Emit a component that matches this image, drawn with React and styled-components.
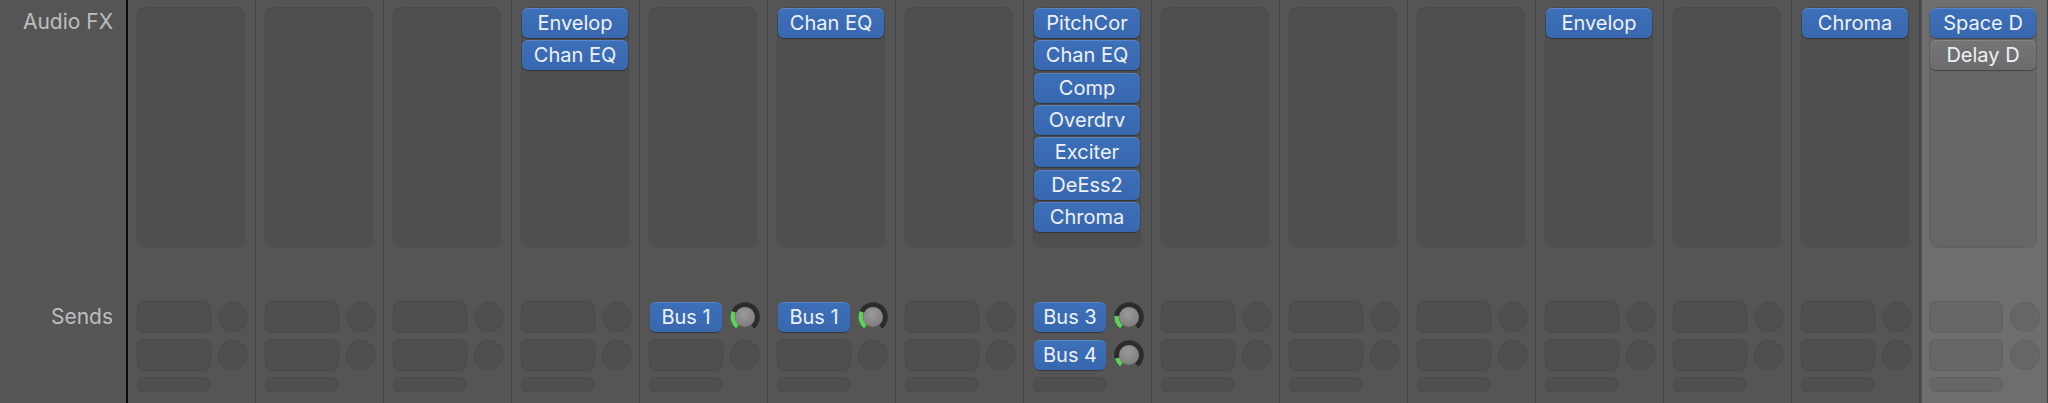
import React from 'react'
import styled, { createGlobalStyle } from 'styled-components'

const GlobalStyle = createGlobalStyle`
  html, body {
    margin: 0;
    padding: 0;
    background: #555555;
  }
  body {
    font-family: "Inter", "Liberation Sans", sans-serif;
  }
`

const Mixer = styled.div`
  display: flex;
  width: 2048px;
  height: 403px;
  background: #555555;
  overflow: hidden;
`

const LabelColumn = styled.div`
  width: 126px;
  flex: none;
  border-right: 2px solid #0a0a0a;
  padding-top: 7px;
  box-sizing: content-box;
`

const FxArea = styled.div`
  height: 241px;
  margin-bottom: 53px;
`

const Label = styled.div`
  height: ${p => p.$h}px;
  line-height: ${p => p.$h}px;
  text-align: right;
  padding-right: 13px;
  font-size: 21px;
  color: #bebebe;
`

const Strip = styled.div`
  width: 128px;
  flex: none;
  box-sizing: border-box;
  padding: 7px 0 0 9px;
  background: ${p => (p.$selected ? '#6e6e6e' : '#555555')};
  border-right: 1px solid #474747;
  box-shadow: ${p => (p.$selected ? 'inset 2px 0 0 #4e4e4e' : 'none')};
`

const FxPanel = styled.div`
  width: 108px;
  height: 241px;
  box-sizing: border-box;
  padding: 1px;
  border-radius: 9px;
  background: rgba(0, 0, 0, 0.07);
  box-shadow: inset 0 0 0 1px rgba(0, 0, 0, 0.05);
  display: flex;
  flex-direction: column;
  gap: 2.35px;
  margin-bottom: 53px;
`

const PluginButton = styled.div`
  height: 30px;
  box-sizing: border-box;
  border-radius: 6px;
  background: ${p => (p.$off ? 'linear-gradient(#757575, #6c6c6c)' : 'linear-gradient(#3d70ba, #3767af)')};
  box-shadow: inset 0 1px 0 ${p => (p.$off ? 'rgba(255,255,255,0.12)' : 'rgba(255,255,255,0.14)')}, 0 1px 1px rgba(0, 0, 0, 0.35);
  color: #eef2f8;
  font-size: 20px;
  line-height: 30px;
  text-align: center;
  white-space: nowrap;
  overflow: hidden;
`

const SendRow = styled.div`
  display: flex;
  align-items: center;
  gap: 7px;
  height: 32px;
  margin-bottom: 6px;
`

const SendSlot = styled.div`
  width: 74px;
  height: 32px;
  box-sizing: border-box;
  border-radius: 7px;
  padding: 1px;
  background: ${p => (p.$filled ? 'transparent' : 'rgba(0, 0, 0, 0.07)')};
  box-shadow: ${p => (p.$filled ? 'none' : 'inset 0 0 0 1px rgba(0, 0, 0, 0.05)')};
`

const BusButton = styled(PluginButton)`
  height: 30px;
`

const EmptyKnob = styled.div`
  width: 30px;
  height: 30px;
  border-radius: 50%;
  background: rgba(0, 0, 0, 0.07);
  box-shadow: inset 0 0 0 1px rgba(0, 0, 0, 0.05);
`

const Pill = styled.div`
  width: 74px;
  height: 15px;
  border-radius: 8px;
  background: rgba(0, 0, 0, 0.07);
  box-shadow: inset 0 0 0 1px rgba(0, 0, 0, 0.05);
`

const pt = (a, r) => {
  const rad = (a * Math.PI) / 180
  return [15 + r * Math.sin(rad), 15 - r * Math.cos(rad)]
}

const arc = (from, to, r) => {
  const [x1, y1] = pt(from, r)
  const [x2, y2] = pt(to, r)
  const large = to - from > 180 ? 1 : 0
  return `M ${x1.toFixed(2)} ${y1.toFixed(2)} A ${r} ${r} 0 ${large} 1 ${x2.toFixed(2)} ${y2.toFixed(2)}`
}

function Knob({ value }) {
  const start = 218
  const end = start + 284
  const v = start + (end - start) * value
  return (
    <svg width="30" height="30" viewBox="0 0 30 30">
      <defs>
        <radialGradient id="ball" cx="45%" cy="35%" r="70%">
          <stop offset="0%" stopColor="#9a9a9a" />
          <stop offset="100%" stopColor="#7c7c7c" />
        </radialGradient>
      </defs>
      <path d={arc(start, end, 12.3)} fill="none" stroke="#2c2c2c" strokeWidth="5" />
      <path d={arc(start, v, 12.3)} fill="none" stroke="#5fcf5a" strokeWidth="4.6" />
      <circle cx="15" cy="15" r="10" fill="url(#ball)" />
    </svg>
  )
}

const strips = [
  { fx: [], sends: [] },
  { fx: [], sends: [] },
  { fx: [], sends: [] },
  { fx: ['Envelop', 'Chan EQ'], sends: [] },
  { fx: [], sends: [{ name: 'Bus 1', v: 0.27 }] },
  { fx: ['Chan EQ'], sends: [{ name: 'Bus 1', v: 0.27 }] },
  { fx: [], sends: [] },
  {
    fx: ['PitchCor', 'Chan EQ', 'Comp', 'Overdrv', 'Exciter', 'DeEss2', 'Chroma'],
    sends: [{ name: 'Bus 3', v: 0.2 }, { name: 'Bus 4', v: 0.13 }]
  },
  { fx: [], sends: [] },
  { fx: [], sends: [] },
  { fx: [], sends: [] },
  { fx: ['Envelop'], sends: [] },
  { fx: [], sends: [] },
  { fx: ['Chroma'], sends: [] },
  { fx: ['Space D', { name: 'Delay D', off: true }], sends: [], selected: true }
]

function ChannelStrip({ strip }) {
  return (
    <Strip $selected={strip.selected}>
      <FxPanel>
        {strip.fx.map((f, i) => {
          const name = typeof f === 'string' ? f : f.name
          return (
            <PluginButton key={i} $off={f.off}>
              {name}
            </PluginButton>
          )
        })}
      </FxPanel>
      {[0, 1].map(i => {
        const s = strip.sends[i]
        return (
          <SendRow key={i}>
            <SendSlot $filled={!!s}>{s && <BusButton>{s.name}</BusButton>}</SendSlot>
            {s ? <Knob value={s.v} /> : <EmptyKnob />}
          </SendRow>
        )
      })}
      <Pill />
    </Strip>
  )
}

export default function App() {
  return (
    <>
      <GlobalStyle />
      <Mixer>
        <LabelColumn>
          <FxArea>
            <Label $h={30}>Audio FX</Label>
          </FxArea>
          <Label $h={32}>Sends</Label>
        </LabelColumn>
        {strips.map((s, i) => (
          <ChannelStrip key={i} strip={s} />
        ))}
      </Mixer>
    </>
  )
}
